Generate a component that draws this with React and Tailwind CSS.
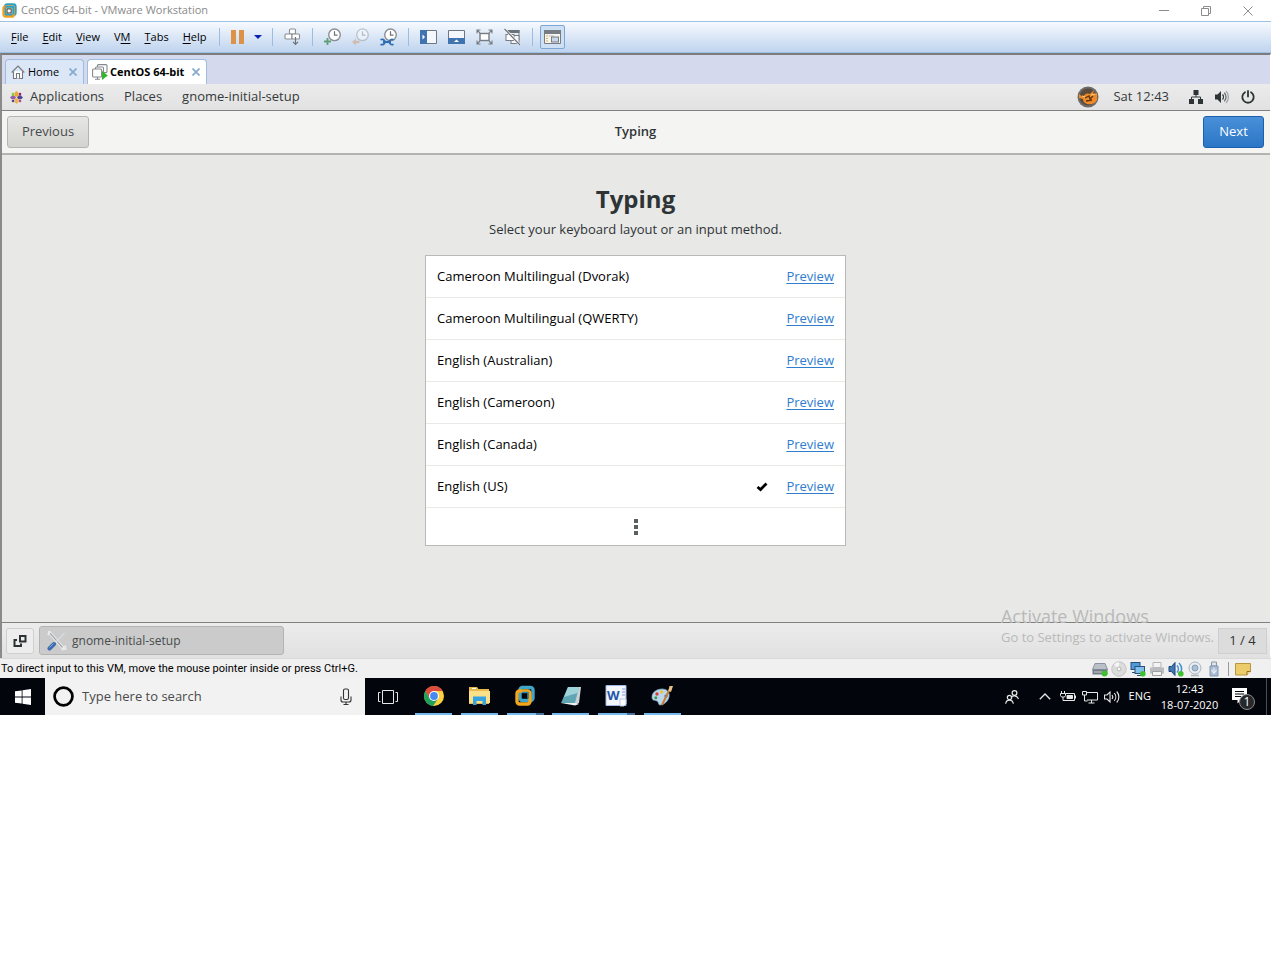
/**
 * App.jsx: Windows 10 desktop with a VMware Workstation window
 *
 *   - VMware title bar, menu, toolbar and tabs
 *   - CentOS guest running gnome-initial-setup (keyboard layout page)
 *   - VMware status bar and the Windows taskbar
 */

import React, { useState } from 'react';

const LAYOUTS = [
  'Cameroon Multilingual (Dvorak)',
  'Cameroon Multilingual (QWERTY)',
  'English (Australian)',
  'English (Cameroon)',
  'English (Canada)',
  'English (US)',
];

// [before, access key, after]
const MENUS = [
  ['', 'F', 'ile'],
  ['', 'E', 'dit'],
  ['', 'V', 'iew'],
  ['V', 'M', ''],
  ['', 'T', 'abs'],
  ['', 'H', 'elp'],
];

/* ---------- Shared icons ---------- */

function VmwareLogo({ className }) {
  return (
    <svg className={className} viewBox="0 0 18 18" fill="none">
      <rect x="3.6" y="1.6" width="12.6" height="12.6" rx="2.6" stroke="#2f9fc4" strokeWidth="2.8" />
      <rect x="1.8" y="4" width="12.4" height="12.4" rx="2.6" stroke="#f0a020" strokeWidth="2.8" />
      <path d="M4 4.5h9.5v9" stroke="#2f9fc4" strokeWidth="2.4" />
      <rect x="6" y="7" width="5" height="5" fill="#fff" stroke="#3a3226" strokeWidth="1.2" />
    </svg>
  );
}

function Clock() {
  return (
    <>
      <circle cx="10.5" cy="6.8" r="5.8" fill="#fff" stroke="#8a8d92" strokeWidth="1.4" />
      <path d="M10.5 3.2v4h3" stroke="#6f7378" strokeWidth="1.2" />
    </>
  );
}

function ToolIcon({ children, label, dim }) {
  return (
    <button aria-label={label} className={dim ? 'opacity-40' : ''}>
      <svg className="w-[18px] h-[18px]" viewBox="0 0 18 18" fill="none">{children}</svg>
    </button>
  );
}

function Sep() {
  return <span className="w-px h-[18px] ml-[10px] mr-[11px] bg-[#9dbce0]" />;
}

/* ---------- VMware chrome ---------- */

function TitleBar() {
  return (
    <header className="h-[21px] flex items-center bg-white pl-[2px] pr-[18px]">
      <VmwareLogo className="w-[15px] h-[15px]" />
      <h1 className="flex-1 ml-1 text-[11px] text-[#8a8a8a]">CentOS 64-bit - VMware Workstation</h1>
      <div className="flex items-center gap-8 text-[#8c8c8c]">
        <button aria-label="Minimize">
          <svg className="w-[10px] h-[10px]" viewBox="0 0 10 10" stroke="currentColor"><path d="M0 4.5h10" /></svg>
        </button>
        <button aria-label="Restore">
          <svg className="w-[10px] h-[10px]" viewBox="0 0 10 10" fill="none" stroke="currentColor">
            <path d="M.5 2.5h7v7h-7zM2.5 2.5v-2h7v7h-2" />
          </svg>
        </button>
        <button aria-label="Close">
          <svg className="w-[10px] h-[10px]" viewBox="0 0 10 10" stroke="currentColor"><path d="M.5.5l9 9M9.5.5l-9 9" /></svg>
        </button>
      </div>
    </header>
  );
}

function MenuBar() {
  return (
    <div className="h-8 flex items-center pl-[11px] border-y border-[#9cc0e6] bg-linear-to-b from-[#f7fafe] to-[#bfd4ee]">
      <nav className="flex gap-[14px] pr-[3px] text-[11px] text-black">
        {MENUS.map(([before, key, after]) => (
          <button key={key}>
            {before}<span className="underline underline-offset-2">{key}</span>{after}
          </button>
        ))}
      </nav>
      <Sep />
      <button aria-label="Suspend" className="flex items-center gap-[9px]">
        <svg className="w-[14px] h-[14px]" viewBox="0 0 14 14"><path d="M0 0h5v14H0zM8 0h5v14H8z" fill="#dc9348" /></svg>
        <svg className="w-2 h-1" viewBox="0 0 8 4"><path d="M0 0h8L4 4z" fill="#0a1fb4" /></svg>
      </button>
      <Sep />
      <ToolIcon label="Send Ctrl+Alt+Del">
        <g fill="#fff" stroke="#8a8d92" strokeWidth="1.1">
          <rect x="5.5" y="1" width="6" height="5" rx="1" />
          <rect x="1" y="6" width="7" height="5" rx="1" />
          <rect x="8" y="6" width="7.5" height="5" rx="1" />
        </g>
        <path d="M11.5 9v7M9 13.8l2.5 2.5 2.5-2.5" stroke="#6f7378" strokeWidth="1.2" />
      </ToolIcon>
      <Sep />
      <div className="flex gap-[10px]">
        <ToolIcon label="Take snapshot">
          <Clock />
          <path d="M3.5 10v7M0 13.5h7" stroke="#5f9f78" strokeWidth="1.8" />
        </ToolIcon>
        <ToolIcon label="Revert snapshot" dim>
          <Clock />
          <path d="M7.5 14H3" stroke="#d08850" strokeWidth="2.4" />
          <path d="M0 14l4-3.5v7z" fill="#d08850" />
        </ToolIcon>
        <ToolIcon label="Manage snapshots">
          <Clock />
          <path d="M3 14h8" stroke="#2f6fb4" strokeWidth="2.2" />
          <path d="M.5 11.8c2-1.2 4.3 0 4.3 2.2s-2.3 3.4-4.3 2.2M13.5 11.8c-2-1-4 0-4 2.2s2 3.2 4 2.2" stroke="#2f6fb4" strokeWidth="1.8" />
        </ToolIcon>
      </div>
      <Sep />
      <div className="flex gap-[10px]">
        <ToolIcon label="Show library">
          <path d="M.5 2.5h16v13H.5z" fill="#f4f7fb" stroke="#6c7684" />
          <path d="M0 2h7v14H0z" fill="#3f74b0" />
          <path d="M2.5 6.5L5 9l-2.5 2.5z" fill="#fff" />
        </ToolIcon>
        <ToolIcon label="Show thumbnails">
          <path d="M.5 2.5h16v13H.5z" fill="#f4f7fb" stroke="#6c7684" />
          <path d="M0 10h17v6H0z" fill="#3f74b0" />
          <path d="M6 14l2.5-2.5L11 14z" fill="#fff" />
        </ToolIcon>
        <ToolIcon label="Full screen">
          <rect x="4" y="5.5" width="9" height="7" fill="#fff" stroke="#777c82" strokeWidth="1.4" />
          <path d="M1 5.5V2h3.5M1 2l3 3M16 5.5V2h-3.5M16 2l-3 3M1 12.5V16h3.5M1 16l3-3M16 12.5V16h-3.5M16 16l-3-3" stroke="#777c82" strokeWidth="1.1" />
        </ToolIcon>
        <ToolIcon label="Unity">
          <rect x="4" y="2.5" width="11" height="9" fill="#e6ebf2" stroke="#777c82" />
          <path d="M3.5 2h12v3h-12z" fill="#6c7077" />
          <rect x="7" y="7.5" width="8" height="8" fill="#f4f7fb" stroke="#777c82" />
          <rect x="2" y="6.5" width="8" height="6" fill="#fff" stroke="#777c82" />
          <path d="M.5 1l15.5 16" stroke="#fff" strokeWidth="2.5" />
          <path d="M.5 1l15.5 16" stroke="#6c7077" strokeWidth="1.2" />
        </ToolIcon>
      </div>
      <span className="w-px h-[18px] ml-[10px] mr-[7px] bg-[#9dbce0]" />
      <button aria-label="Console view" className="w-[25px] h-6 flex items-center justify-center rounded-xs border border-[#7da7d6] bg-[#cfe0f4]">
        <svg className="w-[17px] h-4" viewBox="0 0 17 16" fill="none">
          <path d="M.5 1.5h16v13H.5z" fill="#f6f4ee" stroke="#777c82" />
          <path d="M0 1h17v4H0z" fill="#777c82" />
          <path d="M2 7h2M2 9.5h2M2 12h2" stroke="#e0b050" />
          <path d="M5 7h5" stroke="#b7bcc4" />
          <rect x="7.5" y="8" width="7" height="5" fill="#c9d6e6" stroke="#777c82" />
        </svg>
      </button>
    </div>
  );
}

function TabClose({ label }) {
  return (
    <button aria-label={label}>
      <svg className="w-2 h-2" viewBox="0 0 8 8" stroke="#86abcf" strokeWidth="1.8"><path d="M.5.5l7 7M7.5.5l-7 7" /></svg>
    </button>
  );
}

function Tabs() {
  return (
    <div className="h-[29px] flex items-end gap-[3px] pl-[3px] bg-[#d4d9ed] text-[11px] text-black">
      <div className="w-[79px] h-[25px] flex items-center pl-[5px] pr-[6px] rounded-t border border-b-0 border-[#9dbce0] bg-[#dbe7f6]">
        <svg className="w-[14px] h-[14px]" viewBox="0 0 14 14" fill="#fff" stroke="#74787e" strokeWidth="1.1">
          <path d="M2.5 6.5v7h9v-7" />
          <path d="M.7 7.5L7 1l6.3 6.5" fill="none" />
          <path d="M5.5 13.5v-5h3v5" />
        </svg>
        <button className="flex-1 ml-[3px] text-left">Home</button>
        <TabClose label="Close Home" />
      </div>
      <div className="w-[120px] h-[25px] flex items-center pl-1 pr-[6px] rounded-t border border-b-0 border-[#9dbce0] bg-white">
        <svg className="w-4 h-4" viewBox="0 0 16 16" fill="#fff" stroke="#85898f" strokeWidth="1.1">
          <rect x="5.5" y=".6" width="9.5" height="8" rx="1" />
          <rect x="3.5" y="3" width="8" height="7" rx="1" />
          <rect x=".6" y="5" width="9" height="8" rx="1" />
          <path d="M3 15.3h5M5.5 13v2" />
          <path d="M10 7v9l5.8-4.5z" fill="#34b52c" stroke="none" />
        </svg>
        <button className="flex-1 ml-[2px] text-left font-bold">CentOS 64-bit</button>
        <TabClose label="Close CentOS 64-bit" />
      </div>
    </div>
  );
}

/* ---------- CentOS guest ---------- */

function GnomeTopBar() {
  return (
    <div className="h-[27px] flex items-center pl-2 pr-[15px] border-b border-[#808080] bg-linear-to-b from-[#ebebeb] to-[#e2e2e2] text-[13px] text-[#35393b]">
      <svg className="w-[13px] h-[13px]" viewBox="0 0 14 14">
        <path d="M7 0l2 2v3L7 6.5 5 5V2z" fill="#e8a92c" />
        <path d="M14 7l-2 2H9L7.5 7 9 5h3z" fill="#4d4794" />
        <path d="M7 14l-2-2V9l2-1.5L9 9v3z" fill="#f0b44a" />
        <path d="M0 7l2-2h3l1.5 2L5 9H2z" fill="#9a5aa8" />
        <path d="M2 2h2.5v3.5H2z" fill="#8dc63f" />
        <path d="M9.5 2H12v3H9.5z" fill="#932279" />
        <path d="M9.5 9.5H12V12H9.5z" fill="#b04a8c" />
        <path d="M2 9.5h2.5V12H2z" fill="#4d4794" />
      </svg>
      <nav className="flex-1 flex gap-5 ml-[7px]">
        <button>Applications</button>
        <button>Places</button>
        <button>gnome-initial-setup</button>
      </nav>
      <svg className="w-[22px] h-[22px] mr-[14px]" viewBox="0 0 22 22">
        <circle cx="11" cy="11" r="10.5" fill="#6b6b6b" />
        <circle cx="11" cy="11" r="8.5" fill="#5a4a3c" />
        <path d="M2 8l4 3c2-4 5-4 7-3l4-4-1 4 4-1v7c-2 4-6 5-10 4-3-1-4-3-4-5l-4-1z" fill="#f08a28" />
        <path d="M8 12l4-2 1 3 3-3M9 15l6-1" stroke="#5e3412" strokeWidth="1.3" fill="none" />
        <path d="M5 10l3 1M14 9l4-1" stroke="#ffd27a" strokeWidth="1.2" />
      </svg>
      <time className="mr-5">Sat 12:43</time>
      <div className="flex items-center gap-3 text-[#2e3436]">
        <svg className="w-[14px] h-[14px]" viewBox="0 0 14 14" fill="currentColor">
          <path d="M4.5 0h5v5h-5zM0 9h5v5H0zM9 9h5v5H9z" />
          <path d="M7 5v2M2.5 10V7h9v3" fill="none" stroke="currentColor" />
        </svg>
        <svg className="w-[14px] h-[14px]" viewBox="0 0 14 14" fill="none" stroke="currentColor" strokeWidth="1.3">
          <path d="M0 4.5h2.5L6 1v12L2.5 9.5H0z" fill="currentColor" stroke="none" />
          <path d="M7.5 4.5c1.2 1.3 1.2 3.7 0 5" />
          <path d="M9.3 2.8c2.3 2.4 2.3 6 0 8.4" opacity=".7" />
          <path d="M11 1c3.2 3.3 3.2 8.7 0 12" opacity=".35" />
        </svg>
        <svg className="w-[14px] h-[14px]" viewBox="0 0 14 14" fill="none" stroke="currentColor" strokeWidth="1.8" strokeLinecap="round">
          <path d="M4 2.2a5.7 5.7 0 106 0M7 1v5.5" />
        </svg>
      </div>
    </div>
  );
}

function SetupHeader() {
  return (
    <div className="h-11 grid grid-cols-3 items-center pl-[5px] pr-[6px] border-b-2 border-[#b3b3af] bg-[#f4f4f3] text-[13px]">
      <button className="justify-self-start w-[82px] h-8 rounded-[3px] border border-[#b4b4b0] bg-linear-to-b from-[#e6e6e4] to-[#d3d3d0] text-[#474b4c]">Previous</button>
      <h2 className="justify-self-center font-semibold text-[#2e3436]">Typing</h2>
      <button className="justify-self-end w-[61px] h-8 rounded-[3px] border border-[#1c5fae] bg-linear-to-b from-[#4a90d9] to-[#2a76c6] text-white">Next</button>
    </div>
  );
}

function LayoutList() {
  const [selected, setSelected] = useState('English (US)');

  return (
    <ul className="w-full max-w-[421px] mt-4 border border-[#b9b9b5] bg-white text-[13px] text-black">
      {LAYOUTS.map((name) => (
        <li key={name} className="h-[42px] flex items-center px-[11px] border-b border-[#e9e9e8]">
          <button className="flex-1 text-left" onClick={() => setSelected(name)}>{name}</button>
          {selected === name && (
            <svg className="w-3 h-3 mr-[18px]" viewBox="0 0 12 12" fill="none" stroke="#000" strokeWidth="2.8">
              <path d="M1.5 6L4.5 8.5l6-6" />
            </svg>
          )}
          <a href="#preview" className="text-[#2f7dcf] underline underline-offset-2">Preview</a>
        </li>
      ))}
      <li className="h-[37px] flex items-center justify-center">
        <button aria-label="More layouts">
          <svg className="w-1 h-4" viewBox="0 0 4 16" fill="#5c5f60"><path d="M0 0h4v4H0zM0 6h4v4H0zM0 12h4v4H0z" /></svg>
        </button>
      </li>
    </ul>
  );
}

function GnomeBottomBar() {
  return (
    <div className="relative h-9 flex items-center pl-1 pr-[3px] border-t border-[#808080] bg-linear-to-b from-[#ececec] to-[#e1e1e1] text-[12px] text-[#474b4c]">
      <button aria-label="Show windows" className="w-7 h-[26px] flex items-center justify-center rounded-[3px] border border-[#cfcfcf] bg-[#ededed]">
        <svg className="w-[14px] h-[14px]" viewBox="0 0 14 14" fill="none" stroke="#2e3436" strokeWidth="2">
          <path d="M7 2h5.5v5.5H7z" />
          <path d="M4 6H1.5v6H8V9.5" />
        </svg>
      </button>
      <button className="w-[245px] h-[29px] flex items-center gap-[5px] ml-[5px] pl-[7px] rounded-[3px] border border-[#b3b3b3] bg-[#cbcbcb]">
        <svg className="w-5 h-5" viewBox="0 0 20 20" fill="none">
          <path d="M2.5 1.5l13 15" stroke="#f1f1f1" strokeWidth="3" strokeLinecap="round" />
          <path d="M2.5 1.5l13 15" stroke="#a2a6aa" strokeWidth="1.2" />
          <path d="M1 4l2-3M14.5 18.5l4-.5-.5-3.5" stroke="#e9e9e9" strokeWidth="2" />
          <path d="M17.5 2L9 11" stroke="#d9dcdf" strokeWidth="1.3" />
          <path d="M7 13L2.5 17.5" stroke="#3c6bb0" strokeWidth="4" strokeLinecap="round" />
          <path d="M6.5 12.5l-4 4" stroke="#86aade" strokeWidth="1" />
        </svg>
        gnome-initial-setup
      </button>
      {/* Windows activation watermark lies over the guest */}
      <div className="absolute right-[56px] bottom-3 text-[#b9b9b9] pointer-events-none">
        <p className="text-[18px] leading-6">Activate Windows</p>
        <p className="text-[13px] leading-[18px]">Go to Settings to activate Windows.</p>
      </div>
      <span className="w-[49px] h-[26px] ml-auto flex items-center justify-center border border-[#cfcfcf] bg-[#dcdcdc] text-[13px] text-[#2e3436]">1 / 4</span>
    </div>
  );
}

/* ---------- VMware status bar ---------- */

function StatusBar() {
  return (
    <div className="h-5 flex items-center pt-px pl-px pr-5 border-t border-[#d9d9d9] bg-[#f0f0f0] text-[11px] text-black">
      <p className="flex-1 font-[Roboto,sans-serif]">To direct input to this VM, move the mouse pointer inside or press Ctrl+G.</p>
      <div className="flex items-center gap-[3px]">
        <svg className="w-4 h-4" viewBox="0 0 16 16">
          <path d="M3 2.5h10l2.5 6H.5z" fill="#b9c0c8" stroke="#8b949e" />
          <path d="M.5 8.5h15v5H.5z" fill="#737d88" />
          <path d="M2 11h8" stroke="#c9ced4" />
          <circle cx="12.5" cy="12.5" r="3" fill="#3fc02f" />
        </svg>
        <svg className="w-4 h-4" viewBox="0 0 16 16">
          <circle cx="8" cy="8" r="7.2" fill="#dcdcdc" stroke="#c3c3c3" />
          <path d="M8 8L3 3.5A7 7 0 018 1z" fill="#f5f5f5" />
          <circle cx="8" cy="8" r="2" fill="#f7f7f7" stroke="#b5b5b5" />
        </svg>
        <svg className="w-4 h-4" viewBox="0 0 16 16">
          <rect x="1" y="1.5" width="9" height="7" fill="#4f9bd8" stroke="#2b4e78" />
          <rect x="5" y="5.5" width="9.5" height="7" fill="#7fc0ee" stroke="#2b4e78" />
          <path d="M2 11.5h3M7 14.5h5" stroke="#2b4e78" />
          <circle cx="12.8" cy="12.8" r="2.8" fill="#3fc02f" />
        </svg>
        <svg className="w-4 h-4" viewBox="0 0 16 16">
          <path d="M4 1.5h8v5H4z" fill="#f4f4f4" stroke="#b5b5b5" />
          <path d="M1 6.5h14v6H1z" fill="#b9bcc0" />
          <path d="M3.5 10.5h9v4h-9z" fill="#f4f4f4" stroke="#a0a0a0" />
        </svg>
        <svg className="w-4 h-4" viewBox="0 0 16 16" fill="none">
          <path d="M1 5.5h2.5L7 1.5v13l-3.5-4H1z" fill="#4178b4" stroke="#1e4676" />
          <path d="M9 4.5c1.8 2 1.8 5 0 7M11 2c3.5 3.5 3.5 8.5 0 12" stroke="#3f8fd4" strokeWidth="1.5" />
          <circle cx="12.8" cy="12.8" r="2.8" fill="#3fc02f" />
        </svg>
        <svg className="w-4 h-4" viewBox="0 0 16 16">
          <circle cx="8" cy="7" r="6" fill="#e8edf2" stroke="#a9b4c0" />
          <circle cx="8" cy="7" r="3" fill="#a5c2da" stroke="#8b9cae" />
          <path d="M4 14.5h8" stroke="#a9b4c0" strokeWidth="1.5" />
        </svg>
        <svg className="w-4 h-4" viewBox="0 0 16 16">
          <path d="M5.5 1h5v4h-5z" fill="#dfe4ea" stroke="#8897aa" />
          <path d="M4 5h8v10H4z" fill="#a9bbd2" stroke="#8598b2" />
          <path d="M8 6.5v6.5M6 8.5v2l2 1 2-1v-2" stroke="#f2f6fb" fill="none" />
        </svg>
        <span className="w-px h-[14px] mx-[3px] bg-[#9a9a9a]" />
        <svg className="w-4 h-4" viewBox="0 0 16 16">
          <path d="M.5 2.5h15v8l-3.5 3.5H.5z" fill="#eccb6b" stroke="#b8963c" />
          <path d="M15.5 10.5H12V14" fill="#fbe9ae" stroke="#8a6d22" />
        </svg>
      </div>
    </div>
  );
}

/* ---------- Windows taskbar ---------- */

const APPS = [
  {
    name: 'Chrome',
    icon: (
      <>
        <circle cx="11" cy="11" r="10" fill="#fcd03f" />
        <path d="M11 6h8.66A10 10 0 002.34 6l4.3 7.5z" fill="#dd4b3e" />
        <path d="M2.34 6A10 10 0 0010 20.95l5.3-7.4-8.6 0z" fill="#1fa05c" />
        <circle cx="11" cy="11" r="5" fill="#fff" />
        <circle cx="11" cy="11" r="3.9" fill="#4688f1" />
      </>
    ),
  },
  {
    name: 'File Explorer',
    icon: (
      <>
        <path d="M1 2h8l1.5 2H21v15H1z" fill="#e8b94c" />
        <path d="M1 6h21v12H1z" fill="#fbe08a" />
        <path d="M4 3.5h4" stroke="#fff" />
        <path d="M5 11.5h13V20h-3.5v-4h-6v4H5z" fill="#34a3df" />
      </>
    ),
  },
  {
    name: 'VMware Workstation',
    split: true,
    icon: (
      <g fill="none" strokeWidth="3.4">
        <rect x="6" y="2.5" width="13" height="13" rx="2.5" stroke="#3fa6c9" />
        <rect x="3" y="6" width="13" height="13" rx="2.5" stroke="#f2a61f" />
        <path d="M8 7.5h6v6" stroke="#2b87ab" strokeWidth="1.6" />
      </g>
    ),
  },
  {
    name: 'Notepad',
    icon: (
      <>
        <path d="M8 2h13l-2 16-4 2z" fill="#c9d3d6" />
        <path d="M8 2h11l-4 16H1z" fill="#5fa5b4" />
        <path d="M8 2h11l-1.5 6L4 12z" fill="#9fd3da" />
        <path d="M1 18h14l4 1-4 1.5z" fill="#f0f0f0" />
      </>
    ),
  },
  {
    name: 'Word',
    split: true,
    icon: (
      <>
        <path d="M1 .5h20v20H1z" fill="#f3f6fb" stroke="#9db7de" />
        <path d="M17 4h3M17 7h3M17 10h3" stroke="#7f9dcc" />
        <text x="2" y="15" fontSize="13" fontWeight="700" fill="#2456a8">W</text>
        <path d="M15 14h6v5l-2 2h-4z" fill="#fff" stroke="#b9c8e2" />
      </>
    ),
  },
  {
    name: 'Paint',
    icon: (
      <>
        <path d="M1 12c0-5 5-8 10-8s8 3 7 8-6 8-9 8c-2 0-1-3-3-4s-5 0-5-4z" fill="#b9d8ee" stroke="#7eaccc" strokeWidth=".7" />
        <circle cx="6" cy="9" r="1.7" fill="#d83c32" />
        <circle cx="10.5" cy="7" r="1.7" fill="#f0c22c" />
        <circle cx="4.8" cy="12.8" r="1.5" fill="#3e9b40" />
        <circle cx="15" cy="11" r="1.6" fill="#3a62c8" />
        <path d="M19.5 2.5L11 20" stroke="#c87a34" strokeWidth="2" />
        <path d="M17.5 6l1-5 3.5 0-2 6z" fill="#e8c08a" />
      </>
    ),
  },
];

function Taskbar() {
  return (
    <footer className="h-[37px] flex items-center bg-[#02050b] text-white">
      <button aria-label="Start" className="w-[45px] h-full flex items-center justify-center">
        <svg className="w-4 h-4" viewBox="0 0 16 16" fill="#fff">
          <path d="M0 2.3l6.7-.9v6.2H0zM7.5 1.3L16 .1v7.5H7.5zM0 8.4h6.7v6.2L0 13.7zM7.5 8.4H16v7.5l-8.5-1.2z" />
        </svg>
      </button>
      <label className="w-80 h-full flex items-center pl-2 pr-3 bg-[#f2f2f2]">
        <svg className="w-[21px] h-[21px]" viewBox="0 0 20 20"><circle cx="10" cy="10" r="8.5" fill="none" stroke="#000" strokeWidth="2.6" /></svg>
        <input
          type="text"
          aria-label="Search"
          placeholder="Type here to search"
          className="flex-1 min-w-0 ml-2 bg-transparent text-[13px] placeholder:text-[#4a4a4a] focus:outline-none"
        />
        <svg className="w-[14px] h-[18px]" viewBox="0 0 14 18" fill="none" stroke="#333" strokeWidth="1.1">
          <rect x="4.5" y="1" width="5" height="10.5" rx="1.5" />
          <path d="M2 8.5v3.5c0 1.5 1 2 2 2h6c1 0 2-.5 2-2V8.5M7 14v2.5M4.5 16.5h5" />
        </svg>
      </label>
      <button aria-label="Task view" className="w-[46px] h-full flex items-center justify-center">
        <svg className="w-5 h-[14px]" viewBox="0 0 20 14" fill="none" stroke="#e8e8e8">
          <path d="M4.5.5h11v13h-11zM2.5 2.5h-2v9h2M17.5 2.5h2v9h-2" />
        </svg>
      </button>
      <div className="w-[274px] h-full grid grid-cols-6">
        {APPS.map((app) => (
          <button key={app.name} aria-label={app.name} className="flex flex-col items-center">
            <span className="flex-1 flex items-center">
              <svg className="w-[22px] h-[22px]" viewBox="0 0 22 22">{app.icon}</svg>
            </span>
            <span className="w-[37px] h-[2px] flex bg-[#76b9ed]">
              {app.split && <span className="w-2 h-full ml-auto bg-[#48729a]" />}
            </span>
          </button>
        ))}
      </div>
      <div className="flex-1 h-full flex items-center justify-end">
        <svg className="w-[14px] h-[14px]" viewBox="0 0 14 14" fill="none" stroke="#e8e8e8" strokeWidth="1.2">
          <circle cx="9.5" cy="3" r="2.4" />
          <path d="M6 7.5c1.5-2.3 6-2.5 7.4 1.5" />
          <circle cx="4.5" cy="7.5" r="2.2" />
          <path d="M.7 13.8c.4-5 7-5 7.6 0" />
        </svg>
        <svg className="w-3 h-[7px] ml-5" viewBox="0 0 12 7" fill="none" stroke="#e8e8e8" strokeWidth="1.3"><path d="M.8 6.2L6 1l5.2 5.2" /></svg>
        <svg className="w-4 h-[14px] ml-[9px]" viewBox="0 0 16 14" fill="none" stroke="#e8e8e8">
          <path d="M5.5 3.5h9v7h-9M15.5 5.5v3" />
          <path d="M7 5.5h5.5v3H7z" fill="#e8e8e8" />
          <path d="M1.5 1v2M4.5 1v2M.5 3.5h5v2l-1 1.5h-3l-1-1.5zM3 7v3.5h3" />
        </svg>
        <svg className="w-4 h-[14px] ml-[6px]" viewBox="0 0 16 14" fill="none" stroke="#e8e8e8">
          <path d="M5 2.5h10.5v7.5H5M9.5 10v3M6.5 13h6" />
          <path d="M.5 1.5h4v3.5h-4zM2.5 5v6h3" />
        </svg>
        <svg className="w-[17px] h-[14px] ml-[6px]" viewBox="0 0 17 14" fill="none" stroke="#e8e8e8" strokeWidth="1.1">
          <path d="M.5 5v4h2.5l3 3V2L3 5z" />
          <path d="M8 5c1 1.2 1 2.8 0 4M10.3 3.2c2 2.2 2 5.4 0 7.6M12.7 1.5c2.9 3.1 2.9 7.9 0 11" />
        </svg>
        <span className="ml-2 text-[11px]">ENG</span>
        <time className="w-[77px] text-center text-[11px] leading-4">12:43<br />18-07-2020</time>
        <button aria-label="Notifications" className="relative w-[22px] h-[22px] ml-1">
          <svg className="w-[22px] h-[22px]" viewBox="0 0 22 22">
            <path d="M0 2h15v12H9l-3.5 3.5V14H0z" fill="#fff" />
            <path d="M3 5.5h9M3 8h9M3 10.5h6" stroke="#02050b" />
          </svg>
          <span className="absolute left-[7px] top-2 w-4 h-4 flex items-center justify-center rounded-full border border-[#8a8a8a] bg-[#26282c] text-[12px] leading-none">1</span>
        </button>
        <span className="w-px h-full ml-3 mr-1 bg-[#4a4d52]" />
      </div>
    </footer>
  );
}

export default function App() {
  return (
    <div className="min-h-screen bg-white font-['Open_Sans',sans-serif]">
      <TitleBar />
      <MenuBar />
      <main className="border-l-2 border-t-2 border-r border-l-[#8a8a8a] border-t-[#7c7c7c] border-r-white">
        <Tabs />
        <GnomeTopBar />
        <SetupHeader />
        <section className="min-h-[467px] flex flex-col items-center pt-7 pr-px bg-[#e8e8e7] text-[#2e3436]">
          <h2 className="text-[24px] leading-8 font-bold">Typing</h2>
          <p className="mt-1 text-[13px] leading-5">Select your keyboard layout or an input method.</p>
          <LayoutList />
        </section>
        <GnomeBottomBar />
      </main>
      <StatusBar />
      <Taskbar />
    </div>
  );
}
